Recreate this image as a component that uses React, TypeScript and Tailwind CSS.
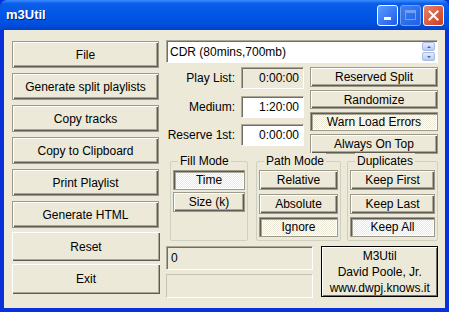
import React from "react";

const raised =
  "bg-[#ECE9D8] border border-[#9d9a8c] shadow-[inset_1px_1px_0_#ffffff,inset_-1px_-1px_0_#5e5c52,inset_-2px_-2px_0_#aca899]";
const pressed =
  "border border-[#9d9a8c] shadow-[inset_1px_1px_0_#5e5c52,inset_2px_2px_0_#aca899,inset_-1px_-1px_0_#ffffff] bg-[repeating-conic-gradient(#ffffff_0_25%,#ECE9D8_0_50%)] bg-[length:2px_2px]";
const sunken =
  "border border-t-[#aca899] border-l-[#aca899] border-b-white border-r-white shadow-[inset_1px_1px_0_#716f64]";

function Btn({ label, down, className = "" }: { label: string; down?: boolean; className?: string }) {
  return (
    <div className={`flex items-center justify-center ${down ? pressed : raised} ${className}`}>
      {label}
    </div>
  );
}

function Group({ title, className = "", children }: { title: string; className?: string; children: React.ReactNode }) {
  return (
    <div className={`relative mt-[6px] border border-[#d0d0bf] rounded-[2px] h-[80px] ${className}`}>
      <span className="absolute -top-[9px] left-[7px] bg-[#ECE9D8] px-[2px] leading-[16px]">{title}</span>
      <div className="flex flex-col pt-[8px]">{children}</div>
    </div>
  );
}

const leftButtons = [
  "File",
  "Generate split playlists",
  "Copy tracks",
  "Copy to Clipboard",
  "Print Playlist",
  "Generate HTML",
];

export default function App() {
  return (
    <div
      className="w-[449px] h-[312px] bg-[#0831d9] flex flex-col text-[12px] text-black overflow-hidden"
      style={{ fontFamily: '"Liberation Sans", Arial, sans-serif' }}
    >
      {/* title bar */}
      <div className="h-[30px] shrink-0 flex items-center pl-[6px] pr-[5px] rounded-t-[7px] bg-[linear-gradient(to_bottom,#3b8cff_0%,#0a5ee8_12%,#0056e6_50%,#0050df_80%,#0042c8_100%)]">
        <span className="text-white font-bold text-[13px] flex-1 [text-shadow:1px_1px_#0a1f80]">m3Util</span>
        <div className="flex gap-[2px]">
          <div className="w-[21px] h-[21px] rounded-[3px] border border-white bg-[linear-gradient(135deg,#5c9dff,#1c5ae8)] flex items-end justify-center pb-[5px]">
            <div className="w-[7px] h-[3px] bg-white" />
          </div>
          <div className="w-[21px] h-[21px] rounded-[3px] border border-[#8fb2f5] bg-[linear-gradient(135deg,#4c8af5,#2a64e8)] flex items-center justify-center opacity-80">
            <div className="w-[11px] h-[10px] border border-[#8fb2f5] border-t-[3px]" />
          </div>
          <div className="w-[21px] h-[21px] rounded-[3px] border border-white bg-[linear-gradient(135deg,#e8826a,#c8401e)] flex items-center justify-center">
            <svg width="11" height="11" viewBox="0 0 11 11">
              <path d="M1.5 1.5 L9.5 9.5 M9.5 1.5 L1.5 9.5" stroke="white" strokeWidth="2" strokeLinecap="square" />
            </svg>
          </div>
        </div>
      </div>

      {/* client area */}
      <div className="mx-[4px] h-[278px] bg-[#ECE9D8] flex pl-[8px] pt-[10px]">
        {/* left column */}
        <div className="w-[148px] flex flex-col">
          {leftButtons.map((b, i) => (
            <Btn key={b} label={b} className={`w-[147px] h-[27px] ${i > 0 ? "mt-[5px]" : "mt-[1px]"}`} />
          ))}
          <div className="mt-[4px] w-[148px] h-[29px] flex items-center justify-center bg-[#ECE9D8] shadow-[inset_1px_1px_0_#ffffff,inset_-1px_-1px_0_#5e5c52,inset_-2px_-2px_0_#aca899]">Reset</div>
          <div className="mt-[3px] w-[148px] h-[30px] flex items-center justify-center bg-[#ECE9D8] shadow-[inset_1px_1px_0_#ffffff,inset_-1px_-1px_0_#5e5c52,inset_-2px_-2px_0_#aca899]">Exit</div>
        </div>

        {/* right area */}
        <div className="ml-[6px] w-[272px] flex flex-col">
          {/* combo */}
          <div className={`h-[23px] bg-white flex items-center ${sunken}`}>
            <span className="flex-1 pl-[3px]">CDR (80mins,700mb)</span>
            <div className="flex flex-col gap-[1px] mr-[2px]">
              <div className="w-[13px] h-[9px] rounded-[2px] bg-[linear-gradient(#e3ecfd,#b6cbf3)] border border-[#aabbe6] flex items-center justify-center">
                <div className="w-0 h-0 border-l-[2px] border-r-[2px] border-b-[2px] border-l-transparent border-r-transparent border-b-[#4d6185]" />
              </div>
              <div className="w-[13px] h-[9px] rounded-[2px] bg-[linear-gradient(#e3ecfd,#b6cbf3)] border border-[#aabbe6] flex items-center justify-center">
                <div className="w-0 h-0 border-l-[2px] border-r-[2px] border-t-[2px] border-l-transparent border-r-transparent border-t-[#4d6185]" />
              </div>
            </div>
          </div>

          <div className="flex mt-[4px]">
            {/* labels + fields */}
            <div className="w-[138px] flex flex-col">
              {[
                ["Play List:", "0:00:00", true],
                ["Medium:", "1:20:00", false],
                ["Reserve 1st:", "0:00:00", false],
              ].map(([l, v, g], i) => (
                <div key={l as string} className={`flex items-center ${i === 0 ? "" : i === 1 ? "mt-[7px]" : "mt-[6px]"}`}>
                  <span className="w-[70px] text-right pr-[1px]">{l}</span>
                  <div className={`ml-[5px] w-[63px] h-[22px] flex items-center justify-end pr-[4px] ${g ? "bg-[#ECE9D8]" : "bg-white"} ${sunken}`}>
                    {v}
                  </div>
                </div>
              ))}
            </div>
            <div className="ml-[6px] w-[128px] flex flex-col gap-[3px]">
              <Btn label="Reserved Split" className="h-[20px]" />
              <Btn label="Randomize" className="h-[19px]" />
              <Btn label="Warn Load Errors" down className="h-[19px]" />
              <Btn label="Always On Top" className="h-[20px]" />
            </div>
          </div>

          {/* groups */}
          <div className="flex mt-[1px]">
            <Group title="Fill Mode" className="ml-[4px] w-[78px]">
              <Btn label="Time" down className="mx-[2px] h-[20px]" />
              <Btn label="Size (k)" className="mx-[2px] mt-[2px] h-[20px]" />
            </Group>
            <Group title="Path Mode" className="ml-[8px] w-[85px]">
              <Btn label="Relative" className="mx-[2px] h-[20px]" />
              <Btn label="Absolute" className="mx-[2px] mt-[4px] h-[20px]" />
              <Btn label="Ignore" down className="mx-[2px] mt-[3px] h-[20px]" />
            </Group>
            <Group title="Duplicates" className="ml-[6px] w-[91px]">
              <Btn label="Keep First" className="mx-[2px] h-[20px]" />
              <Btn label="Keep Last" className="mx-[2px] mt-[4px] h-[20px]" />
              <Btn label="Keep All" down className="mx-[2px] mt-[3px] h-[20px]" />
            </Group>
          </div>

          {/* bottom */}
          <div className="flex mt-[5px]">
            <div className="w-[148px] flex flex-col">
              <div className={`h-[24px] flex items-center pl-[4px] ${sunken}`}>0</div>
              <div className="mt-[4px] h-[24px] border border-t-[#c5c2b2] border-l-[#c5c2b2] border-b-white border-r-white" />
            </div>
            <div className="ml-[8px] w-[117px] h-[51px] border border-black bg-[#ECE9D8] shadow-[inset_1px_1px_0_#ffffff,inset_-1px_-1px_0_#716f64] flex flex-col items-center justify-center leading-[16px]">
              <span>M3Util</span>
              <span>David Poole, Jr.</span>
              <span>www.dwpj.knows.it</span>
            </div>
          </div>
        </div>
      </div>
    </div>
  );
}
